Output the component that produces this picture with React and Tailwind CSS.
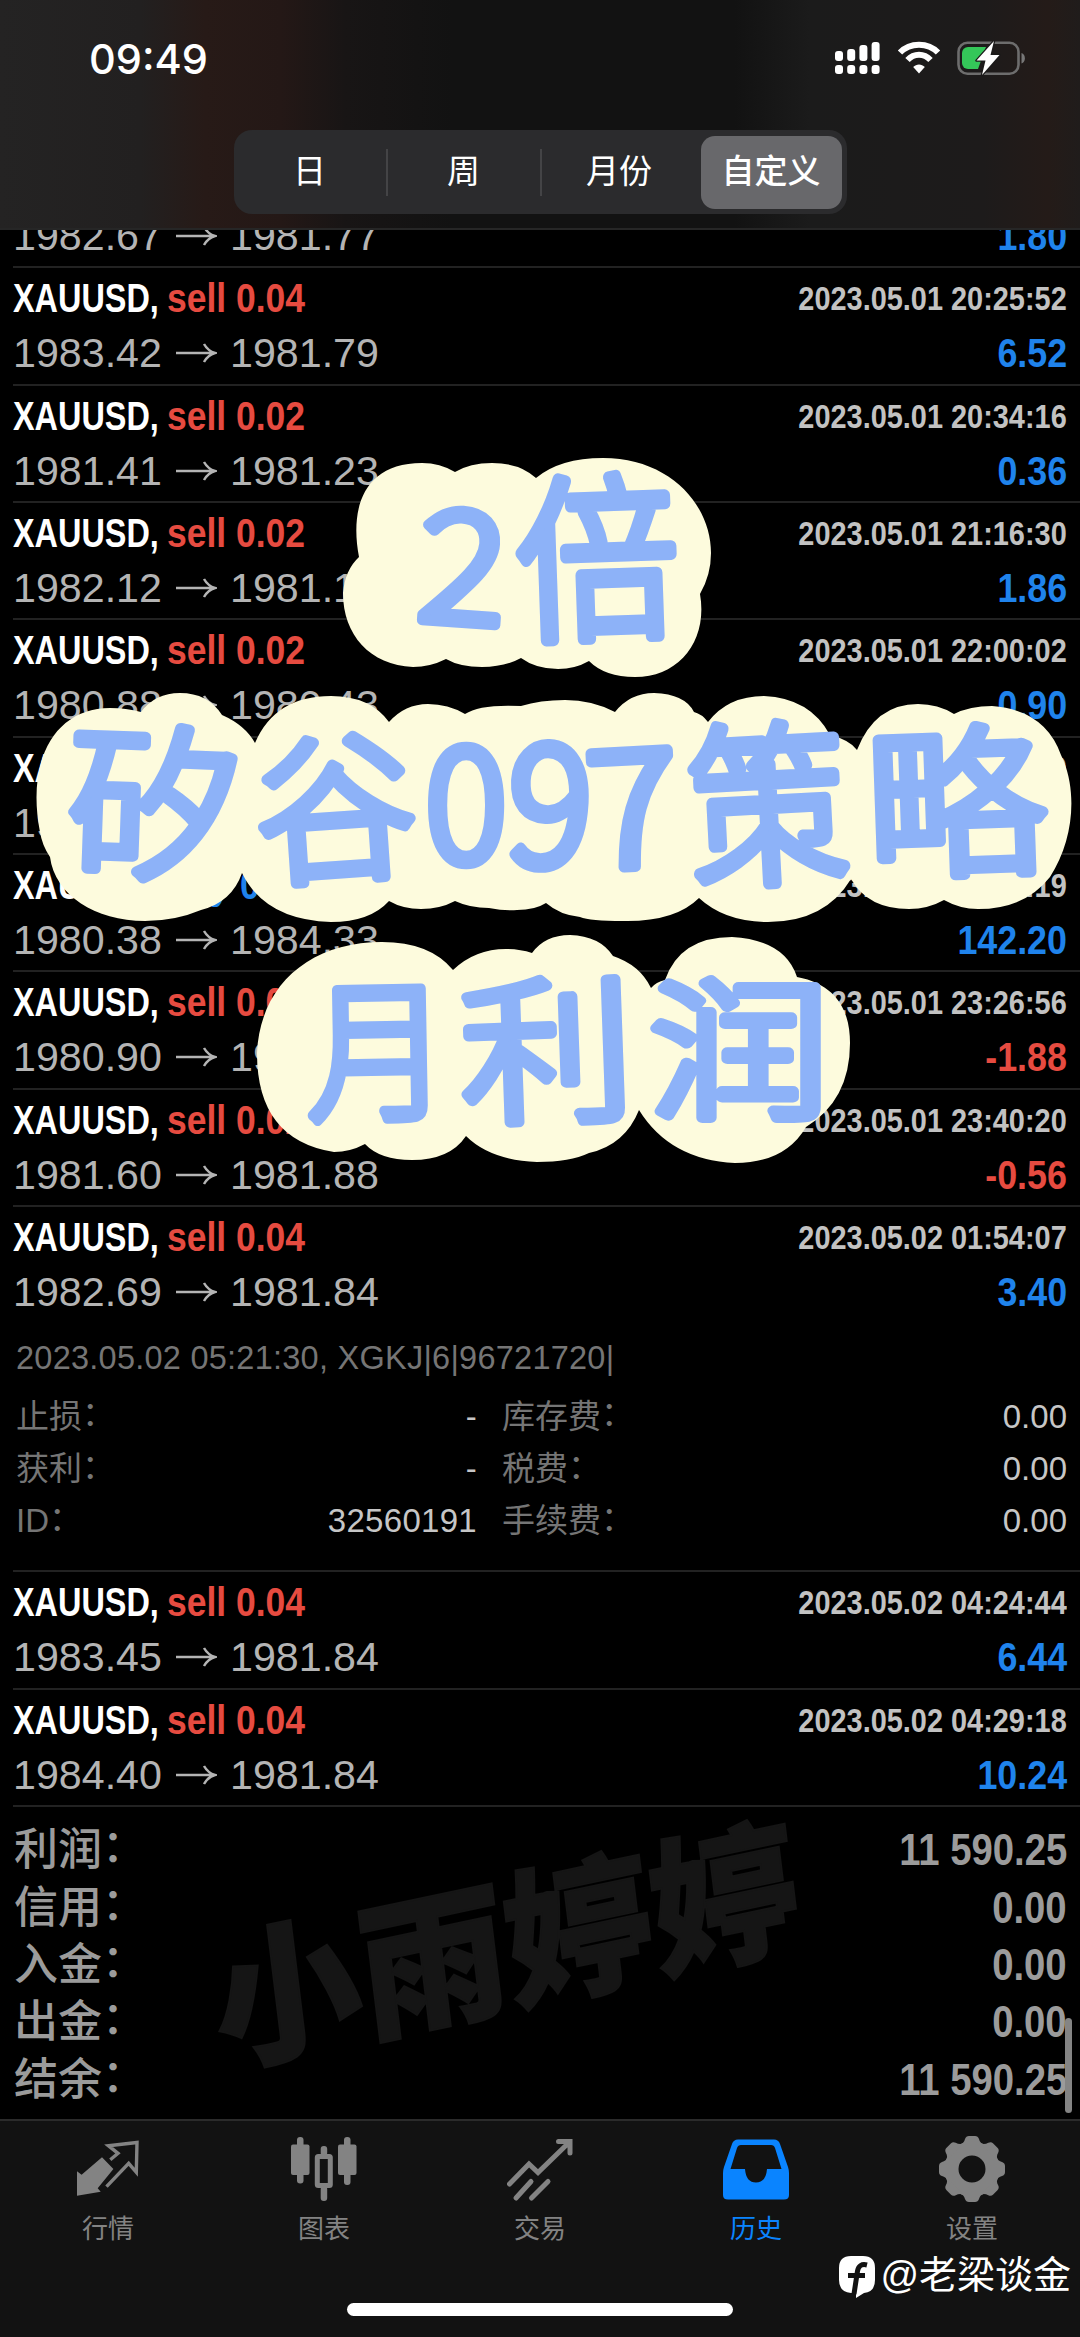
const CJK = "font-['Liberation_Sans','Noto_Sans_CJK_SC',sans-serif]"

const BLUE = 'text-[#1f83ec]'
const RED = 'text-[#e64b40]'

const TRADES = [
  { side: 'sell', volume: '0.04', time: '2023.05.01 20:25:52', open: '1983.42', close: '1981.79', profit: '6.52' },
  { side: 'sell', volume: '0.02', time: '2023.05.01 20:34:16', open: '1981.41', close: '1981.23', profit: '0.36' },
  { side: 'sell', volume: '0.02', time: '2023.05.01 21:16:30', open: '1982.12', close: '1981.19', profit: '1.86' },
  { side: 'sell', volume: '0.02', time: '2023.05.01 22:00:02', open: '1980.88', close: '1980.43', profit: '0.90' },
  { side: 'sell', volume: '0.02', time: '2023.05.01 22:31:40', open: '1981.05', close: '1980.43', profit: '1.24' },
  { side: 'buy', volume: '0.36', time: '2023.05.01 23:07:19', open: '1980.38', close: '1984.33', profit: '142.20' },
  { side: 'sell', volume: '0.04', time: '2023.05.01 23:26:56', open: '1980.90', close: '1981.37', profit: '-1.88' },
  { side: 'sell', volume: '0.02', time: '2023.05.01 23:40:20', open: '1981.60', close: '1981.88', profit: '-0.56' },
  { side: 'sell', volume: '0.04', time: '2023.05.02 01:54:07', open: '1982.69', close: '1981.84', profit: '3.40', expanded: true },
  { side: 'sell', volume: '0.04', time: '2023.05.02 04:24:44', open: '1983.45', close: '1981.84', profit: '6.44' },
  { side: 'sell', volume: '0.04', time: '2023.05.02 04:29:18', open: '1984.40', close: '1981.84', profit: '10.24' },
]

const DETAILS = [
  ['止损', '-', '库存费', '0.00'],
  ['获利', '-', '税费', '0.00'],
  ['ID', '32560191', '手续费', '0.00'],
]

const SUMMARY = [
  ['利润', '11 590.25'],
  ['信用', '0.00'],
  ['入金', '0.00'],
  ['出金', '0.00'],
  ['结余', '11 590.25'],
]

function StatusIcons() {
  return (
    <svg width="194" height="36" viewBox="0 0 194 36" fill="none">
      {[10, 8, 4, 1].map((top, i) => (
        <g key={top} fill="#fff">
          <rect x={4 + i * 12.2} y={top} width="8" height={20 - top} rx="3" />
          <rect x={4 + i * 12.2} y="24" width="8" height="9" rx="3" />
        </g>
      ))}
      {/* Wifi */}
      <g transform="translate(67 0)">
        <path d="M3 11.5C13 1 31 1 41 11.5" stroke="#fff" strokeWidth="6" transform="translate(-1 0)" />
        <path d="M9.5 19C16 12 26 12 32.5 19" stroke="#fff" strokeWidth="6" />
        <path d="M15.2 26C18.5 22.5 23.5 22.5 26.8 26L21 32.5Z" fill="#fff" />
      </g>
      {/* Battery */}
      <rect x="127.5" y="1.7" width="60" height="31" rx="9" stroke="#6d6d6d" strokeWidth="2.6" />
      <path d="M190.5 12c4.5 1 4.5 9.5 0 10.5z" fill="#777" />
      <path d="M137 6h18l-8 22h-10a6 6 0 0 1-6-6V12a6 6 0 0 1 6-6z" fill="#34c759" />
      <path d="M163 0L145.5 19.5h9l-3.5 14.5L168.5 14h-9z" fill="#fff" stroke="#1b1a1a" strokeWidth="2.5" paintOrder="stroke" strokeLinejoin="round" />
    </svg>
  )
}

function Header() {
  return (
    <header className="relative z-10 h-[230px] shrink-0 border-b-2 border-[#262626] bg-[linear-gradient(90deg,#242323_0%,#222020_13%,#271a17_19%,#241816_26%,#181515_32%,#121212_42%,#121212_68%,#1b1b1b_75%,#1d1b1b_91%,#241b18_97%,#201c1b_100%)]">
      <div className="flex h-[118px] items-center justify-between pr-[55px] pl-[89px]">
        <span className="font-['Inter',sans-serif] text-[41.5px] font-medium text-white">09:49</span>
        <StatusIcons />
      </div>
      <div className={`mx-auto mt-3 flex h-[84px] w-[613px] items-center rounded-[18px] bg-[#2b2b2d] text-[33px] text-white ${CJK}`}>
        <div className="w-[152px] text-center">日</div>
        <div className="h-[47px] w-[2px] bg-[#444446]" />
        <div className="w-[152px] text-center">周</div>
        <div className="h-[47px] w-[2px] bg-[#444446]" />
        <div className="w-[155px] text-center">月份</div>
        <div className="mr-[5px] ml-auto flex h-[73px] w-[141px] items-center justify-center rounded-[14px] bg-[#68686b] font-medium">自定义</div>
      </div>
    </header>
  )
}

function PriceLine({ open, close, profit }) {
  return (
    <div className="flex h-[44px] items-center text-[41.2px] leading-[44px] whitespace-nowrap">
      <span className="w-[162px] text-[#b4b4b4]">{open}</span>
      <svg width="42" height="24" viewBox="0 0 42 24" fill="none" stroke="#b4b4b4" strokeWidth="2.5">
        <path d="M1 12H40M29 3Q33 10 40 12Q33 14 29 21" />
      </svg>
      <span className="ml-[13px] text-[#b4b4b4]">{close}</span>
      <span className={`ml-auto origin-right scale-x-[0.87] font-bold ${profit.startsWith('-') ? RED : BLUE}`}>{profit}</span>
    </div>
  )
}

// The full-width colon sits level with the middle of the characters
function Label({ text }) {
  return (
    <span>
      {text}
      <span className="relative -top-[0.07em]">：</span>
    </span>
  )
}

function Details() {
  return (
    <div className={`h-[248px] pr-[13px] pl-[3px] text-[33px] text-[#757575] ${CJK}`}>
      <div className="pt-[14px] text-[32.5px] leading-[44px] tracking-[0.25px]">2023.05.02 05:21:30, XGKJ|6|96721720|</div>
      <div className="mt-[10px]">
        {DETAILS.map(([left, leftValue, right, rightValue]) => (
          <div key={left} className="flex h-[52.3px] items-center leading-[52px]">
            <Label text={left} />
            <span className="ml-auto tracking-[0.3px] text-[#c6c6c6]">{leftValue}</span>
            <div className="ml-[25px] flex w-[565px] justify-between">
              <Label text={right} />
              <span className="text-[#c6c6c6]">{rightValue}</span>
            </div>
          </div>
        ))}
      </div>
    </div>
  )
}

function TradeRow({ trade }) {
  return (
    <div className="ml-[13px] border-b-2 border-[#222]">
      <div className="flex h-[115.35px] flex-col pt-[8px] pr-[13px]">
        <div className="mb-[11px] flex h-[44px] items-center text-[41px] leading-[44px] font-bold whitespace-nowrap">
          <span className="w-[154px]">
            <span className="inline-block origin-left scale-x-[0.79] text-white">XAUUSD,</span>
          </span>
          <span className={`inline-block origin-left scale-x-[0.865] ${trade.side === 'sell' ? RED : BLUE}`}>
            {trade.side} {trade.volume}
          </span>
          <span className="ml-auto origin-right scale-x-[0.85] text-[34px] text-[#c2c2c2]">{trade.time}</span>
        </div>
        <PriceLine open={trade.open} close={trade.close} profit={trade.profit} />
      </div>
      {trade.expanded && <Details />}
    </div>
  )
}

function Summary() {
  return (
    <section className={`relative h-[312px] pt-[14px] pr-[13px] pl-[14px] text-[#9b9b9b] ${CJK}`}>
      {/* Faint author mark behind the totals */}
      <div className="absolute top-[38px] left-[208px] -rotate-[12deg] -skew-x-[5deg] text-[149px] leading-[210px] font-black whitespace-nowrap text-[#151515] [-webkit-text-stroke:2px_#151515]">
        小雨婷婷
      </div>
      {SUMMARY.map(([label, value]) => (
        <div key={label} className="relative flex h-[57.4px] items-center justify-between text-[44px] leading-[57px]">
          <span className="font-medium">
            <Label text={label} />
          </span>
          <span className="origin-right scale-x-[0.87] font-bold">{value}</span>
        </div>
      ))}
      <div className="absolute top-[211px] right-[8px] h-[95px] w-[7px] rounded-full bg-[#848484]" />
    </section>
  )
}

function QuotesIcon() {
  return (
    <svg width="66" height="66" viewBox="-2 -5 66 66">
      <path d="M33.3 18.7L41 12.3L31.4 4.7L60 1.5L59.3 31.3L51.7 22.3L29.5 45.7" fill="none" stroke="currentColor" strokeWidth="3.4" />
      <path d="M0 30.3L4.6 33.7L25 16.3L36.4 28L20.7 47.3L23.7 50.7L0 54.7Z" fill="currentColor" />
    </svg>
  )
}

function ChartIcon() {
  return (
    <svg width="66" height="66" viewBox="0 0 66 66" fill="currentColor">
      <rect x="0" y="8.5" width="18.5" height="30.5" rx="2" />
      <rect x="6" y="1" width="6.5" height="46.5" rx="3" />
      <rect x="47" y="8.5" width="18.5" height="30.5" rx="2" />
      <rect x="53" y="1" width="6.5" height="48" rx="3" />
      <rect x="26.3" y="20.5" width="13" height="29" rx="1" fill="none" stroke="currentColor" strokeWidth="5" />
      <rect x="29.7" y="10" width="6.5" height="10" rx="3" />
      <rect x="29.7" y="50" width="6.5" height="15" rx="3" />
    </svg>
  )
}

function TradeIcon() {
  return (
    <svg width="66" height="66" viewBox="0 0 66 66" fill="none" stroke="currentColor" strokeWidth="5" strokeLinecap="round">
      <path d="M2.5 48L22 28L31 36.5L62 6.5M51.5 5.5H63V17" />
      <path d="M9 62L24 45.5M24.5 62L41 45.5" />
    </svg>
  )
}

function HistoryIcon() {
  return (
    <svg width="66" height="66" viewBox="0 0 66 66" fill="currentColor" fillRule="evenodd">
      <path d="M15 3.5H51Q55.5 3.5 57 8L65 31Q66 34 66 37V59Q66 63.5 61 63.5H5Q0 63.5 0 59V37Q0 34 1 31L9 8Q10.5 3.5 15 3.5ZM18 9Q15 9 14 12L7.5 33H22Q23 46.5 33 46.5T44 33H58.5L52 12Q51 9 48 9Z" />
    </svg>
  )
}

function SettingsIcon() {
  return (
    <svg width="66" height="66" viewBox="-33 -33 66 66">
      <circle r="20.5" fill="none" stroke="currentColor" strokeWidth="14" />
      {[0, 45, 90, 135, 180, 225, 270, 315].map((angle) => (
        <path key={angle} d="M-12 -24Q-8 -26 -7 -30Q-6 -33 -3 -33H3Q6 -33 7 -30Q8 -26 12 -24Z" fill="currentColor" transform={`rotate(${angle})`} />
      ))}
    </svg>
  )
}

const TABS = [
  { label: '行情', Icon: QuotesIcon },
  { label: '图表', Icon: ChartIcon },
  { label: '交易', Icon: TradeIcon },
  { label: '历史', Icon: HistoryIcon, active: true },
  { label: '设置', Icon: SettingsIcon },
]

function TabBar() {
  return (
    <nav className={`relative flex flex-1 flex-col border-t-2 border-[#2b2b2b] bg-[#121212] ${CJK}`}>
      <div className="flex pt-[15px]">
        {TABS.map(({ label, Icon, active }) => (
          <div key={label} className={`flex flex-1 flex-col items-center ${active ? 'text-[#0a84ff]' : 'text-[#838383]'}`}>
            <Icon />
            <span className="mt-[10px] text-[26px] leading-[34px]">{label}</span>
          </div>
        ))}
      </div>
      <div className="mt-auto mb-[21px] h-[13px] w-[386px] self-center rounded-full bg-white" />
      <div className="absolute top-[128px] right-[9px] flex items-center text-[38px] leading-[50px] text-white">
        <svg className="mt-[5px] mr-[3px]" width="40" height="46" viewBox="0 0 40 46">
          <path d="M14 2H26Q38 2 38 14V26Q38 38 27 39L19 44V39H14Q2 38 2 26V14Q2 2 14 2Z" fill="#fff" />
          <path d="M30 11Q22 9 20.5 17L17 40M11 21.5H28" fill="none" stroke="#121212" strokeWidth="5" />
        </svg>
        <span>@老梁谈金</span>
      </div>
    </nav>
  )
}

const CLOUDS = [
  'M359 557C350 510 362 463 422 463Q440 463 455 472Q470 463 492 463Q520 463 536 478Q560 458 603 458C670 458 711 505 711 553Q711 575 700 594C708 640 680 677 635 677Q605 677 589 661Q575 669 558 669Q536 669 521 658Q505 667 482 667Q460 667 446 659Q430 667 413 667C370 665 343 635 343 593Q345 570 359 557Z',
  'M40 832C26 760 55 708 110 708Q126 708 141 712Q155 693 180 693Q208 693 222 715Q245 725 255 743Q275 696 331 696Q370 696 389 722Q405 704 428 704Q448 704 465 714Q480 704 521 706Q540 700 565 700Q592 700 615 712Q630 693 654 693Q685 694 694 712Q702 714 708 722Q728 696 764 696Q810 698 830 735Q850 740 857 750Q875 704 918 704Q938 704 954 714Q970 706 992 706Q1045 710 1061 755C1078 790 1074 840 1050 877Q1025 909 978 909Q960 909 944 900Q928 909 909 909Q868 909 851 879Q825 922 768 922Q725 922 699 898Q675 922 623 921Q590 921 580 917Q560 915 546 903Q535 910 517 910Q505 911 489 908Q470 908 455 901Q440 909 421 909Q403 909 389 901Q370 922 331 922Q265 920 242 873Q232 902 201 910Q175 921 145 921C95 921 55 895 50 857Q42 845 40 832Z',
  'M257 1053C260 985 310 942 382 942Q430 942 453 970Q475 949 506 949Q520 949 532 953Q545 935 570 935Q600 936 613 956Q640 965 651 988Q656 982 665 980Q680 937 732 937Q785 940 797 977C840 985 850 1015 850 1043Q850 1100 806 1127Q785 1163 735 1163Q670 1160 639 1110Q625 1145 589 1153Q570 1162 537 1162Q490 1160 466 1136Q450 1160 412 1160Q380 1160 365 1144Q350 1152 334 1152Q257 1140 257 1053Z',
]

// Centre and size of every sticker character
const STICKER = [
  { ch: '2', x: 463, y: 566, w: 88, h: 124, r: 4, digit: true },
  { ch: '倍', x: 597, y: 558, w: 160, h: 176, r: -2 },
  { ch: '矽', x: 155, y: 803, w: 172, h: 164, r: 2 },
  { ch: '谷', x: 335, y: 807, w: 158, h: 160, r: -4 },
  { ch: '0', x: 466, y: 803, w: 82, h: 128, r: 0, digit: true },
  { ch: '9', x: 550, y: 804, w: 84, h: 134, r: 3, digit: true },
  { ch: '7', x: 632, y: 807, w: 92, h: 130, r: -3, digit: true },
  { ch: '策', x: 768, y: 804, w: 156, h: 174, r: -3 },
  { ch: '略', x: 956, y: 802, w: 176, h: 162, r: -2 },
  { ch: '月', x: 378, y: 1050, w: 140, h: 152, r: -1 },
  { ch: '利', x: 547, y: 1050, w: 170, h: 156, r: -2 },
  { ch: '润', x: 739, y: 1050, w: 178, h: 150, r: 0 },
]

function Sticker() {
  return (
    <svg className="absolute top-0 left-0 z-20" width="1080" height="1200" viewBox="0 0 1080 1200">
      {CLOUDS.map((d) => (
        <path key={d} d={d} fill="#fdfbdd" />
      ))}
      <g
        className="font-['Noto_Sans_CJK_SC',sans-serif]"
        fontSize="150"
        fontWeight="300"
        textAnchor="middle"
        fill="#8db2f8"
        stroke="#8db2f8"
        strokeWidth="10"
        strokeLinejoin="round"
      >
        {STICKER.map(({ ch, x, y, w, h, r, digit }) => (
          <text
            key={ch}
            y={digit ? 55 : 57}
            transform={`translate(${x} ${y}) rotate(${r}) scale(${w / (digit ? 80 : 147)} ${h / (digit ? 120 : 149)})`}
          >
            {ch}
          </text>
        ))}
      </g>
    </svg>
  )
}

export default function App() {
  return (
    <div className="relative flex h-[2337px] w-[1080px] flex-col overflow-hidden bg-black font-['Liberation_Sans',Arial,sans-serif]">
      <Header />
      <main className="shrink-0">
        {/* Row that is scrolled halfway under the header */}
        <div className="ml-[13px] h-[38.3px] border-b-2 border-[#222] pr-[13px]">
          <div className="relative -top-[16px]">
            <PriceLine open="1982.67" close="1981.77" profit="1.80" />
          </div>
        </div>
        {TRADES.map((trade) => (
          <TradeRow key={trade.time} trade={trade} />
        ))}
        <Summary />
      </main>
      <TabBar />
      <Sticker />
    </div>
  )
}
